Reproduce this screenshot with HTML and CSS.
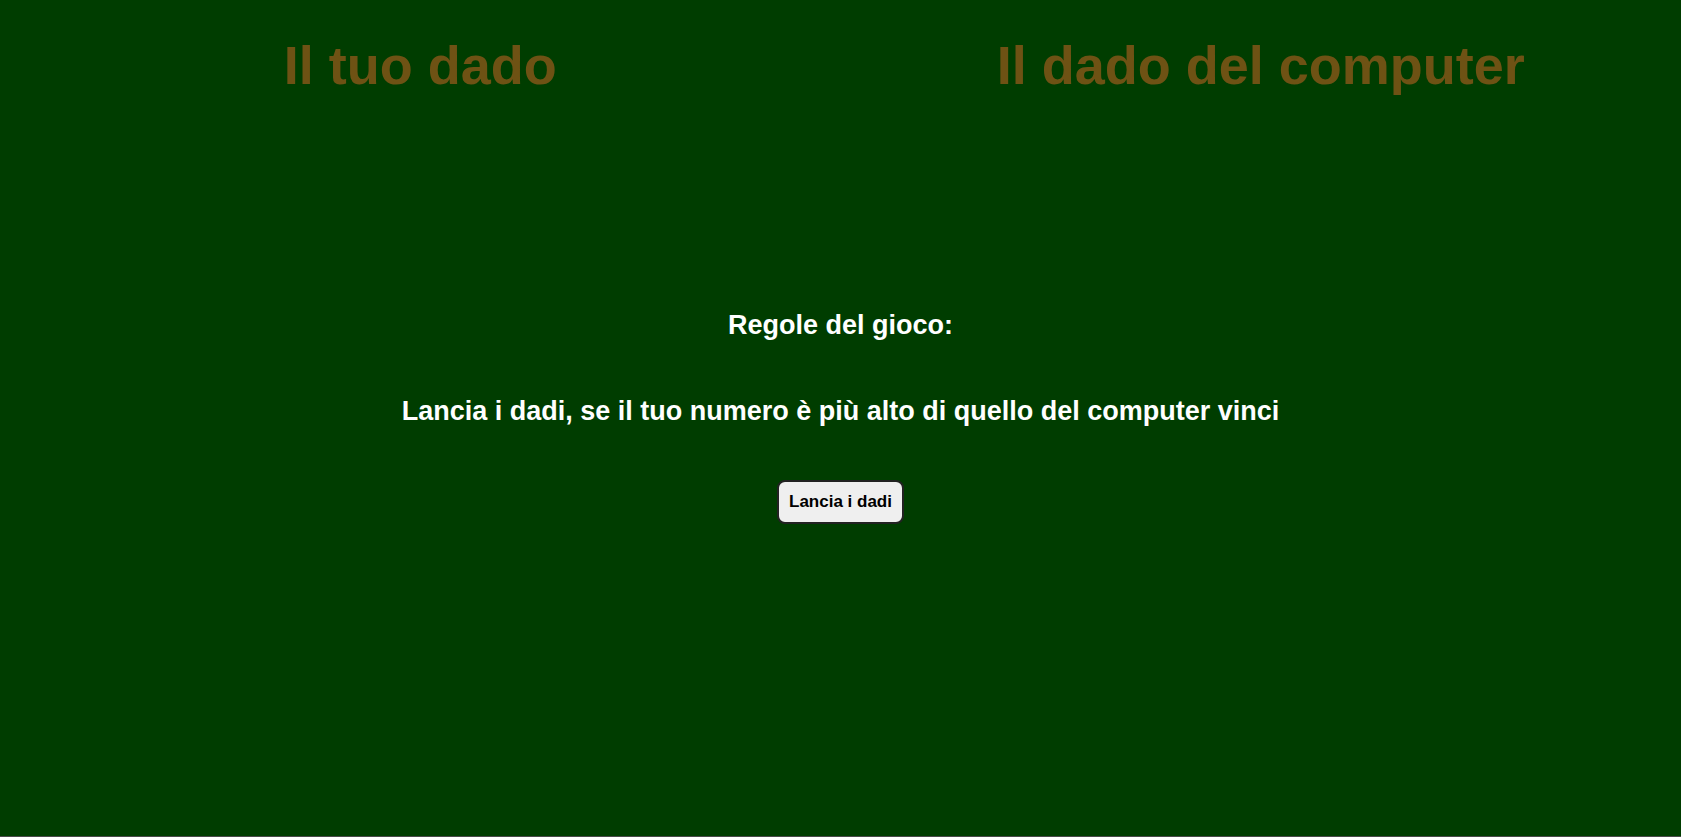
FILE: index.html
```html
<!DOCTYPE html>
<html lang="it">
<head>
<meta charset="utf-8">
<title>Gioco dei dadi</title>
<link rel="stylesheet" href="styles.css">
</head>
<body>
<div class="page">
  <header class="players">
    <div class="player">
      <h1 class="player-title">Il tuo dado</h1>
    </div>
    <div class="player">
      <h1 class="player-title">Il dado del computer</h1>
    </div>
  </header>
  <section class="rules">
    <p class="rules-title">Regole del gioco:</p>
    <p class="rules-text">Lancia i dadi, se il tuo numero è più alto di quello del computer vinci</p>
    <button class="roll-btn" type="button">Lancia i dadi</button>
  </section>
</div>
</body>
</html>
```
FILE: styles.css
```css
html, body {
  margin: 0;
  padding: 0;
}
body {
  background: #003d00;
  font-family: "Liberation Sans", Arial, sans-serif;
}
.page {
  min-height: 100vh;
  box-sizing: border-box;
  border-bottom: 1px solid #4a4a4a;
  display: flex;
  flex-direction: column;
}
.players {
  display: flex;
}
.player {
  flex: 1 1 50%;
  text-align: center;
}
.player-title {
  margin: 34px 0 0;
  font-size: 54px;
  line-height: 62px;
  font-weight: bold;
  color: #6e5214;
}
.rules {
  margin-top: 214px;
  display: flex;
  flex-direction: column;
  align-items: center;
  text-align: center;
  color: #ffffff;
}
.rules-title,
.rules-text {
  margin: 0;
  font-size: 27px;
  line-height: 31px;
  font-weight: bold;
}
.rules-text {
  margin-top: 55px;
}
.roll-btn {
  margin-top: 53px;
  font-family: "Liberation Sans", Arial, sans-serif;
  font-size: 17px;
  font-weight: bold;
  line-height: 20px;
  color: #000;
  background: #efefef;
  border: 2px solid #222;
  border-radius: 8px;
  padding: 10px 10px;
}
```
